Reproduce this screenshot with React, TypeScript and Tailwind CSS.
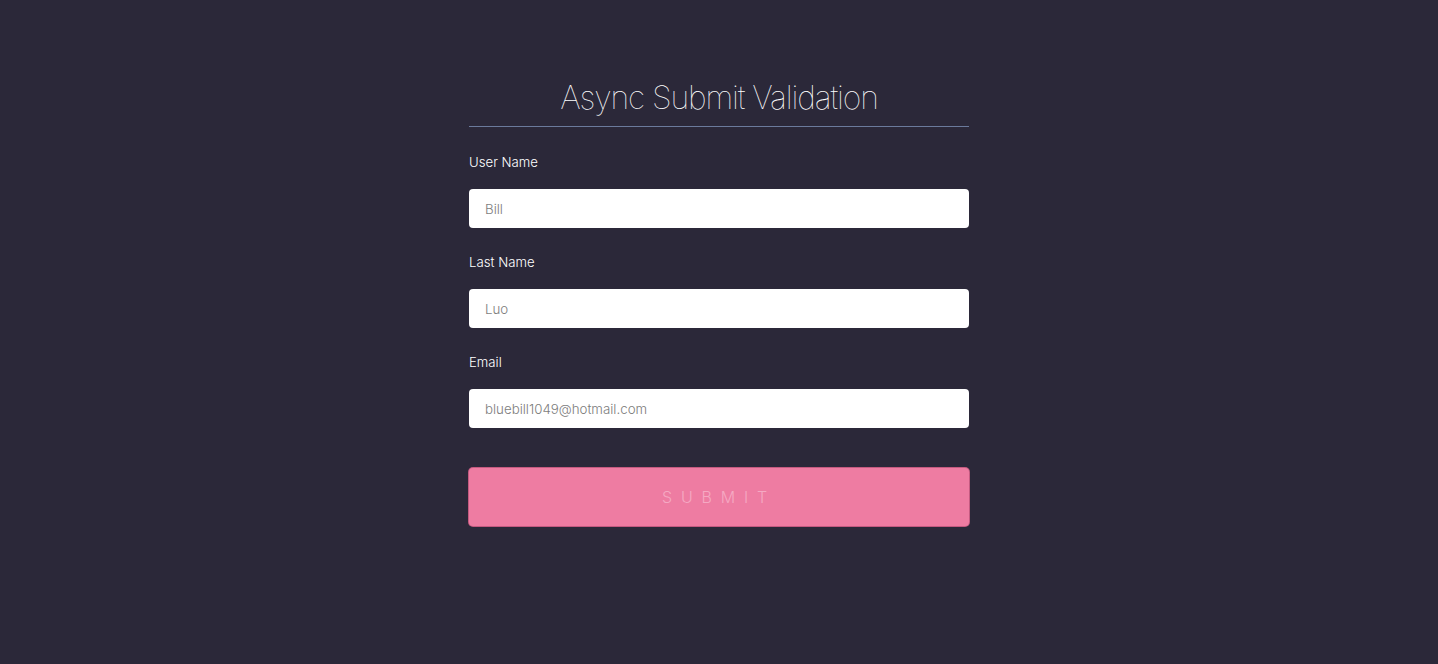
export default function App() {
  const fields = [
    { label: 'User Name', value: 'Bill' },
    { label: 'Last Name', value: 'Luo' },
    { label: 'Email', value: 'bluebill1049@hotmail.com' },
  ]

  return (
    <div className="min-h-screen w-full bg-[#2b2839] font-['Inter','Liberation_Sans',sans-serif]">
      <form className="mx-auto w-[500px] pt-[78px]" onSubmit={e => e.preventDefault()}>
        <h1 className="text-center text-[32px] leading-[40px] font-thin tracking-[-0.035em] text-white">Async Submit Validation</h1>
        <div className="mt-[8px] mb-[1px] h-px bg-[#6b7a9c]" />

        {fields.map(f => (
          <div key={f.label} className="pt-[24px]">
            <label className="block text-[13.2px] leading-[20px] font-light text-white">{f.label}</label>
            <input
              readOnly
              defaultValue={f.value}
              className="mt-[17px] block h-[39px] w-full rounded-[4px] bg-white px-[16px] text-[13.3px] font-light text-[#7d7d7d] outline-none"
            />
          </div>
        ))}

        <button
          type="submit"
          className="mt-[40px] block h-[58px] w-full rounded-[4px] bg-[#ee7ca2] text-[16px] font-light tracking-[0.55em] text-[#f5a9c3] shadow-[0_0_0_1px_#c45a80]"
        >
          SUBMIT
        </button>
      </form>
    </div>
  )
}
